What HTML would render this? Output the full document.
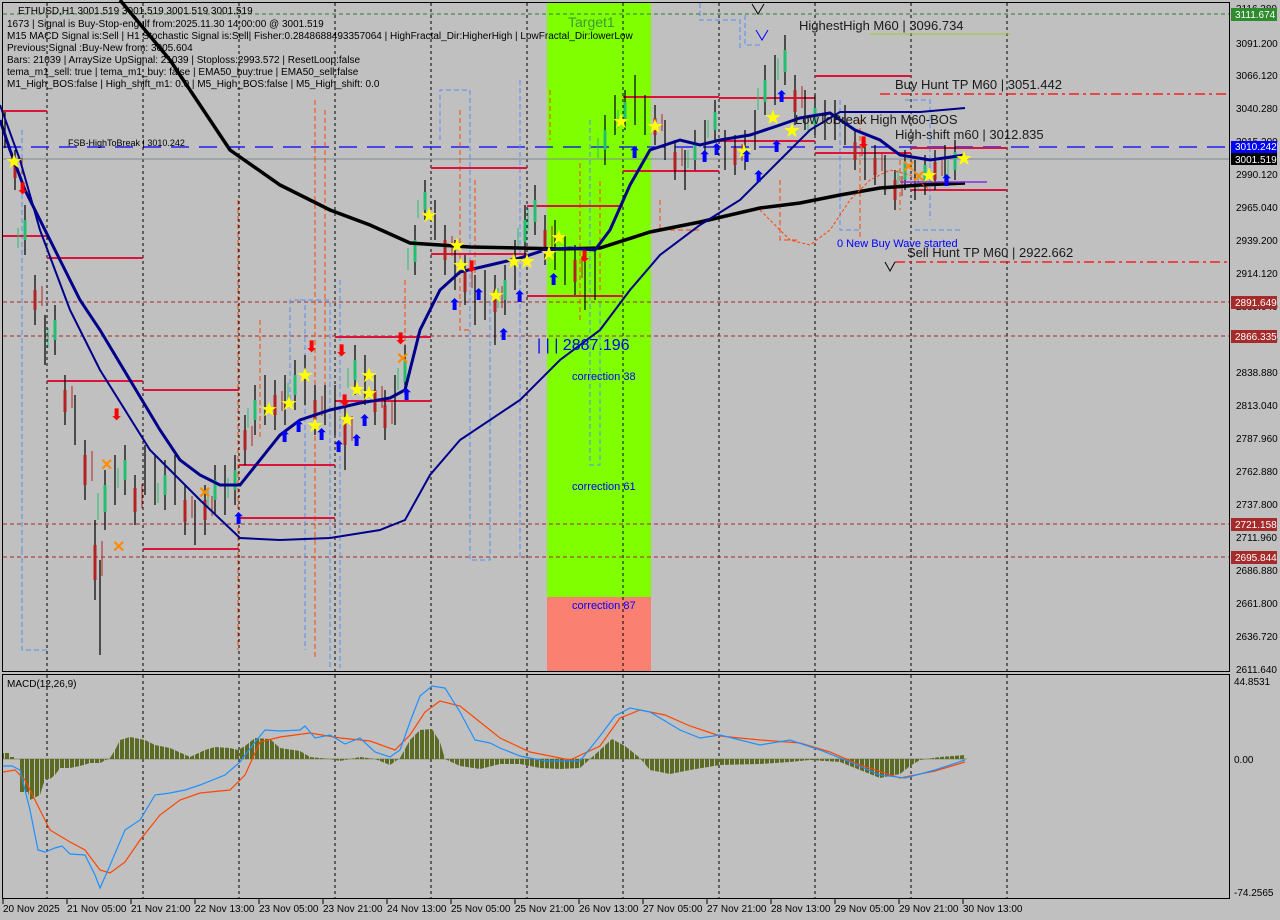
<!DOCTYPE html>
<html><head><meta charset="utf-8"><style>
html,body{margin:0;padding:0;background:#c0c0c0;}
svg{display:block;font-family:"Liberation Sans",sans-serif;}
</style></head><body>
<svg width="1280" height="920" viewBox="0 0 1280 920" xmlns="http://www.w3.org/2000/svg">
<defs>
<pattern id="hb" width="5" height="10" patternUnits="userSpaceOnUse"><rect x="0" y="0" width="4" height="10" fill="#5b6b23"/></pattern>
</defs>
<rect width="1280" height="920" fill="#c0c0c0"/>
<rect x="547" y="3" width="104" height="594" fill="#7fff00"/>
<rect x="547" y="597" width="104" height="74" fill="#fa8072"/>
<g stroke="#000" stroke-width="1" stroke-dasharray="3,3">
<path d="M47 3V672M143 3V672M239 3V672M335 3V672M431 3V672M527 3V672M623 3V672M719 3V672M815 3V672M911 3V672M1007 3V672"/>
<path d="M47 675V898M143 675V898M239 675V898M335 675V898M431 675V898M527 675V898M623 675V898M719 675V898M815 675V898M911 675V898M1007 675V898"/>
</g>
<path d="M3 14H1229" stroke="#2e7d32" stroke-dasharray="4,3"/>
<path d="M3 302H1229M3 336H1229M3 524H1229M3 557H1229" stroke="#a52a2a" stroke-dasharray="4,3"/>
<path d="M3 147H1229" stroke="#0000ff" stroke-width="1.3" stroke-dasharray="18,10"/>
<path d="M3 159H1229" stroke="#808890"/>
<path d="M880 94H1229M895 262H1229" stroke="#ff0000" stroke-dasharray="10,4,3,4" stroke-width="1.3"/>
<path d="M870 34H1010" stroke="#9acd32"/>
<g fill="none" stroke="#5a8ef0" stroke-width="1" stroke-dasharray="5,3">
<path d="M22 130V550M22 550V650H47M290 400V300H305V650M300 300H330V668M340 280V668M440 140V90H470V560H490V300M520 80V560M590 120V465H600V300M700 3V20H740V50M745 15V45H760M840 100V230H860M905 100H930V220M915 230H960"/>
</g>
<g fill="none" stroke="#ff4500" stroke-width="1" stroke-dasharray="5,3">
<path d="M238 200V650M260 320V440M315 100V660M325 110V400M405 280V350M460 110V330H470M475 180V320M550 90V140M580 320V160M600 290V180M660 200V230H700M780 180V240H800M860 120V240M900 160V210"/>
</g>
<g stroke="#dc143c" stroke-width="2">
<path d="M3 111H47M3 236H47M47 258H143M47 381H143M143 390H239M143 549H239M239 465H335M239 518H335M335 337H431M335 401H431M431 168H527M431 254H527M527 206H623M527 296H623M623 97H719M623 171H719M719 98H815M719 141H815M815 76H911M815 153H911M911 148H1007M911 190H1007"/>
</g>
<g stroke="#000" stroke-width="1.2">
<path id="wk" d="M5 112V148M15 150V190M25 205V255M35 275V325M45 315V365M55 305V355M65 375V425M75 395V445M85 440V500M95 520V600M100 560V655M105 470V530M115 455V505M125 445V495M135 475V525M145 445V495M155 455V505M165 460V510M175 455V505M185 485V535M195 500V545M205 485V535M215 465V515M225 465V515M235 455V505M245 415V465M255 385V435M265 375V425M275 380V430M285 375V425M295 360V410M305 355V405M315 385V435M325 385V425M335 385V435M345 405V470M355 345V395M365 355V405M375 375V425M385 390V440M395 375V425M405 345V395M415 225V275M425 180V220M435 200V240M445 225V275M455 240V290M465 255V305M475 275V325M485 270V320M495 275V345M505 265V315M515 240V290M525 205V255M535 185V235M545 215V265M555 220V270M565 235V285M575 245V295M585 260V310M595 250V300M605 115V165M615 95V135M625 90V130M635 75V125M645 95V135M655 105V145M665 120V160M675 140V180M685 150V190M695 130V170M705 120V160M715 100V140M725 130V170M735 135V175M745 130V170M755 110V150M765 65V115M775 55V105M785 35V85M795 75V125M805 90V130M815 95V135M825 100V140M835 100V140M845 105V145M855 130V170M865 140V180M875 145V185M885 155V195M895 170V210M905 150V190M915 160V200M925 155V195M935 150V190M945 145V185M955 140V180"/>
</g>
<use href="#wk" transform="translate(5,6)"/>
<g stroke-width="3">
<path id="rb" stroke="#b22222" d="M15 162V178M35 290V310M65 390V412M85 455V485M95 545V580M135 488V512M185 500V522M205 500V520M245 430V450M275 395V415M315 400V420M345 420V445M375 390V412M385 405V428M445 240V260M465 270V292M495 290V312M545 230V252M575 260V282M655 118V135M675 152V170M735 148V165M795 90V112M855 142V160M875 158V175M895 180V200M935 162V180"/>
<path id="gb" stroke="#20c070" d="M25 220V240M55 320V340M105 485V512M125 460V480M165 475V495M215 480V500M235 470V490M255 400V420M295 375V395M355 360V380M405 360V382M415 240V262M425 192V210M505 280V300M525 220V242M535 200V222M605 130V150M625 102V120M695 142V160M715 112V130M765 80V102M785 50V72M815 108V125M905 162V180M925 165V182M955 152V170"/>
</g>
<use href="#gb" transform="translate(-7,8)"/>
<use href="#rb" transform="translate(7,-4)"/>
<polyline fill="none" stroke="#000" stroke-width="3.5" points="120,0 170,60 230,150 280,185 330,210 370,225 410,243 470,247 520,248 560,249 600,248 650,232 700,222 760,208 800,203 840,195 880,188 920,185 965,183"/>
<polyline fill="none" stroke="#00008b" stroke-width="3" points="0,120 10,150 25,190 40,220 60,260 80,300 100,330 130,380 160,430 180,460 200,475 220,485 240,485 260,460 280,435 300,420 330,410 360,403 390,398 405,390 420,330 440,290 460,272 490,265 520,258 545,250 570,248 595,250 610,230 630,185 650,150 680,140 700,145 720,140 750,135 780,125 800,118 830,113 855,130 880,140 900,155 930,160 965,155"/>
<polyline fill="none" stroke="#00008b" stroke-width="2" points="0,105 20,160 40,230 70,310 100,370 150,450 200,500 240,538 280,540 330,538 380,530 405,520 430,475 460,440 520,400 560,360 600,330 630,290 660,255 700,225 740,200 780,160 810,130 840,112 870,112 920,112 965,108"/>
<polyline fill="none" stroke="#ff4500" stroke-width="1" stroke-dasharray="3,2" points="760,210 790,240 810,245 830,230 850,200 870,180 890,170 910,175 930,190"/>
<path d="M900 182H987" stroke="#8a2be2" stroke-width="1.5"/>
<g fill="#ffff00" font-size="20" font-family="DejaVu Sans,sans-serif">
<text x="5" y="168">★</text><text x="420" y="222">★</text><text x="448" y="252">★</text><text x="452" y="272">★</text>
<text x="260" y="416">★</text><text x="280" y="410">★</text><text x="296" y="382">★</text><text x="306" y="432">★</text>
<text x="338" y="426">★</text><text x="348" y="396">★</text><text x="360" y="382">★</text><text x="360" y="400">★</text>
<text x="487" y="302">★</text><text x="505" y="268">★</text><text x="518" y="268">★</text><text x="540" y="260">★</text><text x="550" y="244">★</text>
<text x="612" y="128">★</text><text x="646" y="133">★</text><text x="735" y="158">★</text><text x="764" y="124">★</text>
<text x="783" y="137">★</text><text x="920" y="182">★</text><text x="955" y="165">★</text>
</g>
<g fill="#0000ff" font-size="16" font-weight="bold" font-family="DejaVu Sans,sans-serif">
<text x="232" y="524">⬆</text><text x="278" y="442">⬆</text><text x="292" y="432">⬆</text><text x="315" y="440">⬆</text>
<text x="332" y="452">⬆</text><text x="350" y="446">⬆</text><text x="358" y="426">⬆</text><text x="400" y="400">⬆</text>
<text x="448" y="310">⬆</text><text x="472" y="300">⬆</text><text x="497" y="340">⬆</text><text x="513" y="302">⬆</text><text x="547" y="285">⬆</text>
<text x="628" y="158">⬆</text><text x="698" y="162">⬆</text><text x="710" y="155">⬆</text><text x="740" y="162">⬆</text>
<text x="752" y="182">⬆</text><text x="770" y="152">⬆</text><text x="775" y="102">⬆</text><text x="940" y="186">⬆</text>
</g>
<g fill="#ff0000" font-size="16" font-weight="bold" font-family="DejaVu Sans,sans-serif">
<text x="16" y="194">⬇</text><text x="110" y="420">⬇</text><text x="305" y="352">⬇</text><text x="335" y="356">⬇</text>
<text x="338" y="406">⬇</text><text x="394" y="344">⬇</text><text x="465" y="272">⬇</text><text x="578" y="262">⬇</text><text x="857" y="148">⬇</text>
</g>
<g fill="#ff8c00" font-size="16" font-weight="bold">
<text x="100" y="470">✕</text><text x="112" y="552">✕</text><text x="198" y="498">✕</text><text x="396" y="364">✕</text><text x="902" y="172">✕</text><text x="912" y="182">✕</text>
</g>
<g font-size="10" fill="#000">
<text x="18" y="14">ETHUSD,H1  3001.519 3001.519 3001.519 3001.519</text>
<text x="7" y="27">1673 | Signal is Buy-Stop-engulf from:2025.11.30 14:00:00 @ 3001.519</text>
<text x="7" y="39">M15 MACD Signal is:Sell | H1 Stochastic Signal is:Sell| Fisher:0.2848688493357064 | HighFractal_Dir:HigherHigh | LowFractal_Dir:lowerLow</text>
<text x="7" y="51">Previous Signal :Buy-New from: 3005.604</text>
<text x="7" y="63">Bars: 21039 | ArraySize UpSignal: 21039 | Stoploss:2993.572 | ResetLoop:false</text>
<text x="7" y="75">tema_m1_sell: true | tema_m1_buy: false | EMA50_buy:true | EMA50_sell:false</text>
<text x="7" y="87">M1_High_BOS:false | High_shift_m1: 0.0 | M5_High_BOS:false | M5_High_shift: 0.0</text>
<text x="68" y="146" font-size="9">FSB-HighToBreak | 3010.242</text>
</g>
<g font-size="13" fill="#1a1a1a">
<text x="799" y="30">HighestHigh    M60 | 3096.734</text>
<text x="895" y="89">Buy Hunt TP M60 | 3051.442</text>
<text x="795" y="124">LowToBreak High    M60-BOS</text>
<text x="895" y="139">High-shift m60 | 3012.835</text>
<text x="907" y="257">Sell Hunt TP M60 | 2922.662</text>
</g>
<text x="568" y="27" font-size="14" fill="#3c9a3c">Target1</text>
<text x="837" y="247" font-size="11" fill="#0000ff">0 New Buy Wave started</text>
<text x="537" y="350" font-size="16" fill="#0000ff">| | | 2887.196</text>
<g font-size="11" fill="#0000ff"><text x="572" y="380">correction 38</text><text x="572" y="490">correction 61</text><text x="572" y="609">correction 87</text></g>
<g fill="none" stroke="#000" stroke-width="1"><path d="M752 4L758 14L764 4M885 262L890 271L895 262"/></g>
<path d="M756 30L762 40L768 30" fill="none" stroke="#0000ff"/>
<text x="7" y="687" font-size="10">MACD(12,26,9)</text>
<polygon fill="url(#hb)" points="3,759 3,753 10,753 10,757 15,757 15,759 20,759 20,792 28,792 30,800 40,795 45,779 50,779 55,775 60,768 70,768 80,766 90,763 100,763 110,758 115,750 120,740 130,737 145,740 155,745 170,748 190,757 205,750 215,747 230,748 238,750 245,746 255,738 270,739 280,748 300,751 310,757 330,759 340,761 360,757 375,759 390,765 400,758 410,740 420,730 432,729 440,742 445,759 460,766 480,769 500,764 520,764 540,768 560,769 580,768 600,750 612,739 625,746 640,758 650,770 670,774 690,770 720,765 760,764 790,762 810,760 840,762 860,770 880,778 900,774 910,766 920,760 940,757 965,755 965,759"/>
<path d="M3 759H967" stroke="#5b6b23" stroke-width="0.6"/>
<polyline fill="none" stroke="#ff4500" stroke-width="1.2" points="3,772 15,770 25,780 35,800 50,830 70,842 85,850 100,870 110,873 125,862 140,840 160,815 180,800 200,793 230,790 245,775 260,742 280,737 310,733 340,738 370,741 395,750 410,735 425,712 440,701 460,706 480,722 500,738 530,752 570,760 600,746 620,718 640,710 665,715 690,726 720,736 760,740 800,743 830,752 860,765 900,778 935,771 965,762"/>
<polyline fill="none" stroke="#1e90ff" stroke-width="1.2" points="3,766 12,766 20,770 30,810 38,850 45,852 55,848 62,846 70,854 85,855 95,875 100,888 108,870 125,830 140,820 155,795 170,793 185,790 200,785 225,775 240,762 255,742 265,730 280,731 300,730 305,726 315,738 330,735 345,744 360,738 375,752 390,757 400,750 410,722 420,696 432,686 445,688 460,712 475,740 490,743 500,748 520,756 545,761 580,761 600,736 615,716 630,708 650,712 680,730 700,738 720,735 760,745 790,740 820,750 850,762 880,775 905,778 935,770 965,760"/>
<rect x="2.5" y="2.5" width="1227" height="669" fill="none" stroke="#000"/>
<rect x="2.5" y="674.5" width="1227" height="224" fill="none" stroke="#000"/>
<g font-size="10" fill="#000">
<text x="1236" y="12">3116.380</text><text x="1236" y="47">3091.200</text><text x="1236" y="79">3066.120</text><text x="1236" y="112">3040.280</text>
<text x="1236" y="145">3015.200</text><text x="1236" y="178">2990.120</text><text x="1236" y="211">2965.040</text><text x="1236" y="244">2939.200</text>
<text x="1236" y="277">2914.120</text><text x="1236" y="310">2889.040</text><text x="1236" y="343">2863.960</text><text x="1236" y="376">2838.880</text>
<text x="1236" y="409">2813.040</text><text x="1236" y="442">2787.960</text><text x="1236" y="475">2762.880</text><text x="1236" y="508">2737.800</text>
<text x="1236" y="541">2711.960</text><text x="1236" y="574">2686.880</text><text x="1236" y="607">2661.800</text><text x="1236" y="640">2636.720</text><text x="1236" y="673">2611.640</text>
<text x="1234" y="685">44.8531</text><text x="1234" y="763">0.00</text><text x="1234" y="896">-74.2565</text>
</g>
<g font-size="10" fill="#fff">
<rect x="1231" y="8" width="46" height="13" fill="#2e8b2e"/><text x="1235" y="18">3111.674</text>
<rect x="1231" y="141" width="46" height="12" fill="#0000ff"/><text x="1235" y="150">3010.242</text>
<rect x="1231" y="153" width="46" height="12" fill="#000"/><text x="1235" y="163">3001.519</text>
<rect x="1231" y="296" width="46" height="13" fill="#a52a2a"/><text x="1235" y="306">2891.649</text>
<rect x="1231" y="330" width="46" height="13" fill="#a52a2a"/><text x="1235" y="340">2866.335</text>
<rect x="1231" y="518" width="46" height="13" fill="#a52a2a"/><text x="1235" y="528">2721.158</text>
<rect x="1231" y="551" width="46" height="13" fill="#a52a2a"/><text x="1235" y="561">2695.844</text>
</g>
<g font-size="10" fill="#000">
<text x="3" y="912">20 Nov 2025</text><text x="67" y="912">21 Nov 05:00</text><text x="131" y="912">21 Nov 21:00</text><text x="195" y="912">22 Nov 13:00</text>
<text x="259" y="912">23 Nov 05:00</text><text x="323" y="912">23 Nov 21:00</text><text x="387" y="912">24 Nov 13:00</text><text x="451" y="912">25 Nov 05:00</text>
<text x="515" y="912">25 Nov 21:00</text><text x="579" y="912">26 Nov 13:00</text><text x="643" y="912">27 Nov 05:00</text><text x="707" y="912">27 Nov 21:00</text>
<text x="771" y="912">28 Nov 13:00</text><text x="835" y="912">29 Nov 05:00</text><text x="899" y="912">29 Nov 21:00</text><text x="963" y="912">30 Nov 13:00</text>
</g>
<g stroke="#000"><path d="M3 899V904M67 899V904M131 899V904M195 899V904M259 899V904M323 899V904M387 899V904M451 899V904M515 899V904M579 899V904M643 899V904M707 899V904M771 899V904M835 899V904M899 899V904M963 899V904"/></g>
</svg>
</body></html>
